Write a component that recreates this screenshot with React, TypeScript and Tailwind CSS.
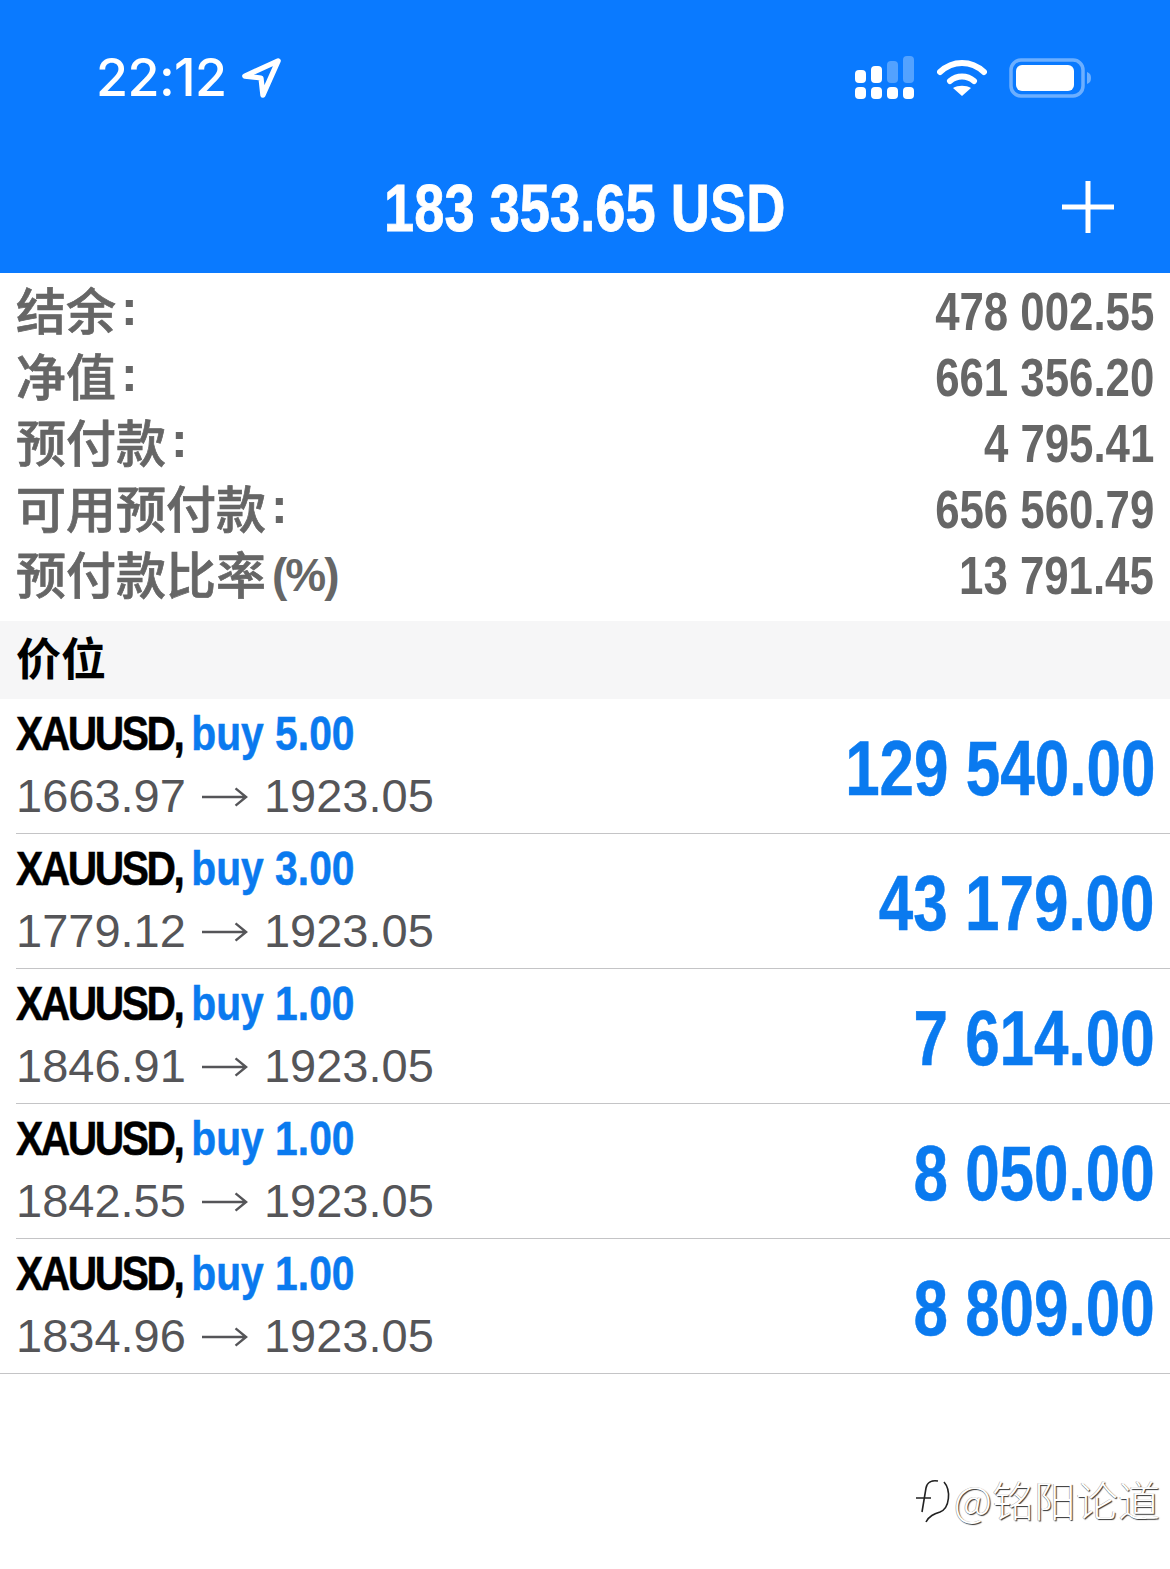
const summary = [
  { label: '结余', suffix: ':', value: '478 002.55' },
  { label: '净值', suffix: ':', value: '661 356.20' },
  { label: '预付款', suffix: ':', value: '4 795.41' },
  { label: '可用预付款', suffix: ':', value: '656 560.79' },
  { label: '预付款比率', suffix: '(%)', value: '13 791.45' },
]

const positions = [
  { lots: '5.00', from: '1663.97', to: '1923.05', profit: '129 540.00' },
  { lots: '3.00', from: '1779.12', to: '1923.05', profit: '43 179.00' },
  { lots: '1.00', from: '1846.91', to: '1923.05', profit: '7 614.00' },
  { lots: '1.00', from: '1842.55', to: '1923.05', profit: '8 050.00' },
  { lots: '1.00', from: '1834.96', to: '1923.05', profit: '8 809.00' },
]

const sans = "font-['Liberation_Sans','Noto_Sans_CJK_SC',sans-serif]"

function StatusIcons() {
  return (
    <div className="flex items-center gap-[22px]">
      <svg width="60" height="44" viewBox="0 0 60 44" fill="white">
        <rect x="0" y="14" width="11" height="13" rx="4" />
        <rect x="16" y="10" width="11" height="17" rx="4" />
        <rect x="32" y="5" width="11" height="22" rx="4" opacity="0.3" />
        <rect x="48" y="0" width="11" height="27" rx="4" opacity="0.3" />
        <rect x="0" y="31" width="11" height="12" rx="4" />
        <rect x="16" y="31" width="11" height="12" rx="4" />
        <rect x="32" y="31" width="11" height="12" rx="4" />
        <rect x="48" y="31" width="11" height="12" rx="4" />
      </svg>
      <svg width="50" height="40" viewBox="0 0 50 40" fill="none" stroke="white" strokeWidth="6" strokeLinecap="round">
        <path d="M3 14C16 2 34 2 47 14" />
        <path d="M13 23C20 17 30 17 37 23" />
        <path d="M25 38L16 30C21 27 29 27 34 30Z" fill="white" stroke="none" />
      </svg>
      <svg width="82" height="40" viewBox="0 0 82 40" fill="none">
        <rect x="2" y="2" width="72" height="36" rx="10" stroke="white" strokeOpacity="0.4" strokeWidth="3.5" />
        <rect x="7" y="7" width="58" height="26" rx="6" fill="white" />
        <path d="M78 14C81 15 82 17 82 20C82 23 81 25 78 26Z" fill="white" fillOpacity="0.4" />
      </svg>
    </div>
  )
}

function Header() {
  return (
    <div className="bg-[#0a7aff] h-[273px] text-white">
      <div className="flex justify-between items-center pl-[96px] pr-[79px] pt-[50px] h-[106px]">
        <div className="flex items-center gap-[15px]">
          <span className="font-['Inter',sans-serif] font-medium text-[52px] leading-[56px] tracking-[-0.6px]">22:12</span>
          <svg width="40" height="40" viewBox="0 0 42 42" fill="none" stroke="white" strokeWidth="5.5" strokeLinejoin="round">
            <path d="M39 3L4 19L21 21L23 39Z" />
          </svg>
        </div>
        <StatusIcons />
      </div>
      <div className="relative flex justify-center items-center h-[100px] mt-[52px]">
        <span className={`${sans} font-bold text-[67px] leading-[70px] whitespace-nowrap scale-x-[0.81] ml-[-1px] [-webkit-text-stroke:0.8px_white]`}>183 353.65 USD</span>
        <svg className="absolute right-[54px] top-[21px]" width="56" height="56" viewBox="0 0 56 56" stroke="white" strokeWidth="5">
          <path d="M28 2V54M2 28H54" />
        </svg>
      </div>
    </div>
  )
}

function PositionRow({ lots, from, to, profit }: { lots: string, from: string, to: string, profit: string }) {
  return (
    <div className="ml-4 pr-4 h-[135px] border-b border-[#c4c4c6] flex items-center justify-between last:ml-0 last:pl-4">
      <div className="pb-[4px]">
        <div className="origin-left scale-x-[0.85] font-bold text-[48px] leading-[63px] whitespace-nowrap">
          <span className="text-black tracking-[-2.9px] [-webkit-text-stroke:0.5px_black]">XAUUSD, </span>
          <span className="text-[#0a7aef] [-webkit-text-stroke:0.5px_#0a7aef]">buy {lots}</span>
        </div>
        <div className="flex items-center text-[47px] leading-[62px] text-[#555558] whitespace-nowrap">
          <span>{from}</span>
          <svg className="mx-[16px] mt-[2px]" width="46" height="24" viewBox="0 0 48 24" fill="none" stroke="#555558" strokeWidth="2.5">
            <path d="M0 12H46M35 3L46 12L35 21" />
          </svg>
          <span>{to}</span>
        </div>
      </div>
      <div className="origin-right scale-x-[0.805] mt-[4px] mr-[-1px] font-bold text-[77px] leading-none text-[#0a7aef] whitespace-nowrap [-webkit-text-stroke:0.5px_#0a7aef]">{profit}</div>
    </div>
  )
}

export default function App() {
  return (
    <div className={`${sans} w-[1170px] h-[1569px] bg-white overflow-hidden`}>
      <Header />
      <div className="h-[348px] pt-[6px] pl-4 pr-4">
        {summary.map(row => (
          <div key={row.label} className="flex justify-between items-center h-[66px] text-[#666666] font-bold">
            <div className="flex items-center whitespace-nowrap">
              <span className="text-[50px] leading-[60px] -mt-[9px] font-medium font-['Noto_Sans_CJK_SC',sans-serif] [-webkit-text-stroke:0.7px_#666666]">{row.label}</span>
              {row.suffix === ':'
                ? <span className="ml-[5px] text-[50px] leading-[60px] mb-[8px]">:</span>
                : <span className="text-[46px] leading-[60px] tracking-[-2px] ml-[6px] -mt-[2px]">{row.suffix}</span>}
            </div>
            <span className="origin-right scale-x-[0.826] text-[53px] leading-[60px] whitespace-nowrap">{row.value}</span>
          </div>
        ))}
      </div>
      <div className="bg-[#f6f6f7] h-[78px] pl-4 pt-[1px] flex items-center text-black font-bold text-[45px] leading-none">价位</div>
      <div>
        {positions.map((p, i) => (
          <PositionRow key={i} {...p} />
        ))}
      </div>
      <div className="flex justify-end items-center gap-[2px] pr-[10px] pt-[100px]">
        <svg width="38" height="50" viewBox="0 0 38 50" fill="none" stroke="#222" strokeWidth="1.6">
          <path d="M2 24H17M8 38L12 14C13 8 18 6 24 7" />
          <path d="M30 8C37 16 36 34 26 38C20 40 15 42 12 48" />
        </svg>
        <span className="text-[42px] leading-[50px] font-['Noto_Sans_CJK_SC',sans-serif] font-light text-white [text-shadow:1px_1px_1px_#333,-0.5px_0_0.5px_#999]">@铭阳论道</span>
      </div>
    </div>
  )
}
